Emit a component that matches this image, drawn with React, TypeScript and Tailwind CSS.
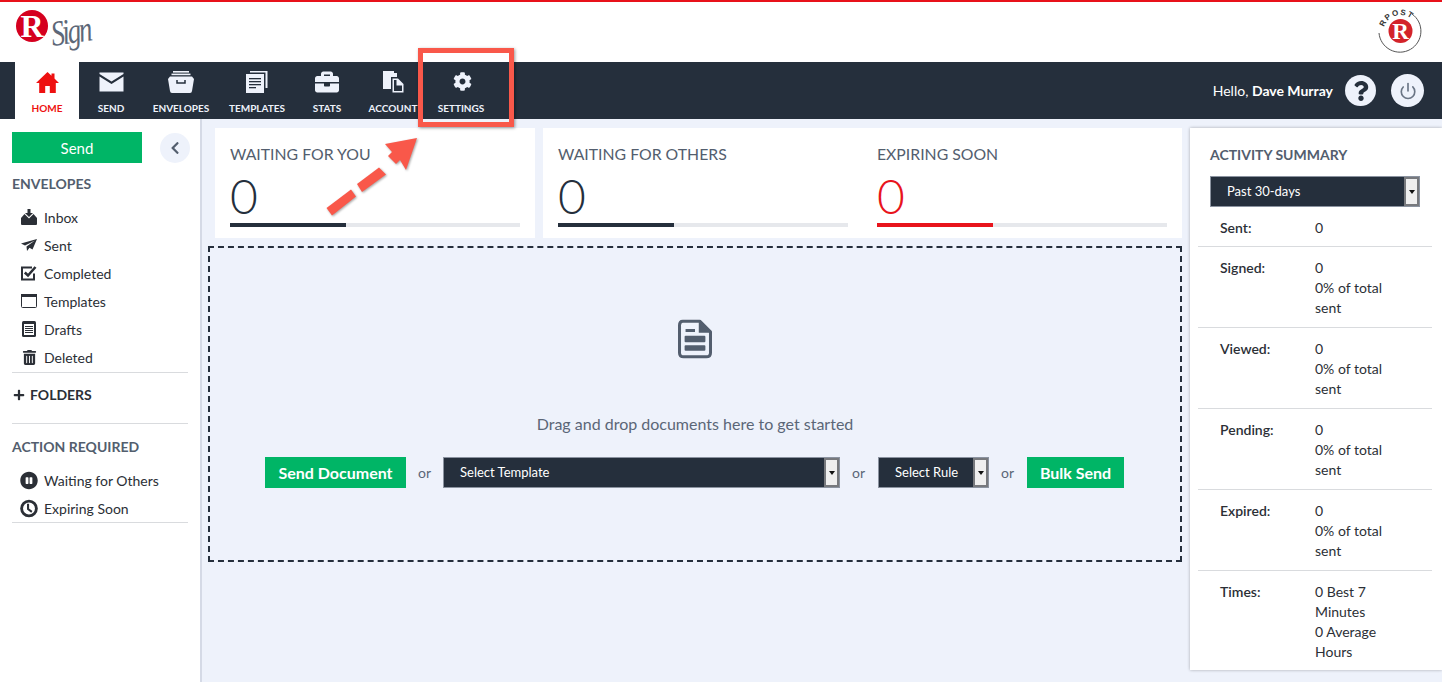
import React from "react";
import { FaCog, FaBriefcase, FaTrashAlt, FaPauseCircle, FaPlus, FaChevronLeft, FaQuestion } from "react-icons/fa";
import { Power } from "lucide-react";

const HomeIcon = () => (
  <svg width="23" height="21" viewBox="0 0 23 21"><path fill="#ee1111" d="M11.5 0 L15.5 3.8 V1.5 H18.5 V6.6 L23 11 H19.8 V21 H13.8 V14 H9.2 V21 H3.2 V11 H0 Z" /></svg>
);
const MailIcon = () => (
  <svg width="25" height="20" viewBox="0 0 25 20" fill="#eef2fb"><path d="M0.500 0.500 H24.500 V2 L12.500 9.500 L0.500 2 Z" /><path d="M0.500 4.500 L12.500 12 L24.500 4.500 V19.500 H0.500 Z" /></svg>
);
const DrawerIcon = () => (
  <svg width="26" height="22" viewBox="0 0 26 22" fill="#eef2fb"><rect x="5" y="0" width="16" height="1.6" /><rect x="3.5" y="2.6" width="19" height="1.6" /><path d="M2 5.5 H24 L26 8 L24 20 Q23.8 22 22 22 H4 Q2.2 22 2 20 L0 8 Z" /><path d="M9 9 V12 H17 V9" fill="none" stroke="#252f3c" strokeWidth="1.5" /></svg>
);
const PagesIcon = () => (
  <svg width="22" height="22" viewBox="0 0 22 22" fill="#eef2fb"><path d="M4 0 H21.500 V17 H19.500 V1.500 H4 Z" /><rect x="0" y="3" width="18" height="19" /><g fill="#252f3c"><rect x="3" y="7" width="12" height="1.300" /><rect x="3" y="10" width="12" height="1.300" /><rect x="3" y="13" width="12" height="1.300" /><rect x="3" y="16" width="7" height="1.300" /></g></svg>
);
const AccountIcon = () => (
  <svg width="21" height="22" viewBox="0 0 21 22" fill="#eef2fb"><path d="M0 0 H11 V2 H14 V6 H8 V18 H0 Z" /><path d="M9.500 7.500 H15 L20.500 13 V21.500 H9.500 Z M11 9 V20 H19 V14.500 H13.500 V9 Z" /></svg>
);
const InboxIcon = () => (
  <svg width="16" height="16" viewBox="0 0 16 16" fill="#2b2f36"><path d="M6.500 0 H9.500 V4 H12 L8 8 L4 4 H6.500 Z" /><path d="M3.500 5 L8 9.500 L12.500 5 L16 9 V15 Q16 16 15 16 H1 Q0 16 0 15 V9 Z" /></svg>
);
const PlaneIcon = () => (
  <svg width="16" height="12" viewBox="0 0 16 12" fill="#2b2f36"><path d="M16 0 L0 4.500 L4 6.500 L14 1.500 L5.500 7.500 L6 12 L8.500 8.800 L11.500 10.500 Z" /></svg>
);
const CheckBoxIcon = () => (
  <svg width="16" height="15" viewBox="0 0 16 15" fill="none" stroke="#2b2f36"><path d="M13 7.500 V13.500 H1 V1.500 H11" strokeWidth="2" /><path d="M3.800 6.500 L7 9.500 L14.500 1" strokeWidth="2.600" /></svg>
);
const WindowIcon = () => (
  <svg width="16" height="14" viewBox="0 0 16 14"><rect x="0.500" y="0.500" width="15" height="13" rx="1" fill="#fff" stroke="#2b2f36" /><rect x="0" y="0" width="16" height="3" fill="#2b2f36" /></svg>
);
const DraftIcon = () => (
  <svg width="14" height="16" viewBox="0 0 14 16"><rect width="14" height="16" rx="1.500" fill="#2b2f36" /><rect x="2" y="3" width="10" height="11" fill="#fff" /><g fill="#2b2f36"><rect x="3" y="5" width="8" height="1" /><rect x="3" y="7" width="8" height="1" /><rect x="3" y="9" width="8" height="1" /><rect x="3" y="11" width="8" height="1" /></g></svg>
);
const ClockIcon = () => (
  <svg width="19" height="19" viewBox="0 0 19 19" fill="none" stroke="#2b2f36"><circle cx="9.500" cy="9.500" r="7.800" strokeWidth="3" /><path d="M8.500 4.500 V10 L12.500 13" strokeWidth="2.200" /></svg>
);
const DocIcon = () => (
  <svg width="34" height="40" viewBox="0 0 36 41"><path fill="none" stroke="#535e6e" strokeWidth="3.200" strokeLinejoin="round" d="M5 1.600 H23 L34.400 13 V35 Q34.400 39.400 30 39.400 H6 Q1.600 39.400 1.600 35 V6 Q1.600 1.600 5 1.600 Z" /><path fill="#535e6e" d="M22 2 V14 H34 Z M8 10 H18 V13 H8 Z" /><rect x="7" y="17" width="22" height="7" rx="1" fill="#535e6e" /><rect x="7" y="27" width="22" height="6" rx="1" fill="#535e6e" /></svg>
);

const NAV = [
  { label: "SEND", w: "w-[64px]", icon: <MailIcon /> },
  { label: "ENVELOPES", w: "w-[76px]", icon: <DrawerIcon /> },
  { label: "TEMPLATES", w: "w-[76px]", icon: <PagesIcon /> },
  { label: "STATS", w: "w-[64px]", icon: <FaBriefcase size={24} /> },
  { label: "ACCOUNT", w: "w-[68px]", icon: <AccountIcon /> },
  { label: "SETTINGS", w: "w-[68px]", icon: <FaCog size={19} className="ml-[2px] -mt-[2px]" /> },
];

const ENVELOPES = [
  { label: "Inbox", icon: <InboxIcon /> },
  { label: "Sent", icon: <PlaneIcon /> },
  { label: "Completed", icon: <CheckBoxIcon /> },
  { label: "Templates", icon: <WindowIcon /> },
  { label: "Drafts", icon: <DraftIcon /> },
  { label: "Deleted", icon: <FaTrashAlt size={15} /> },
];

const Stat = ({ title, red }: { title: string; red?: boolean }) => (
  <div className="w-[290px]">
    <div className="text-[15.8px] leading-[20px] text-[#535e6e]">{title}</div>
    <div className={`mt-[7px] text-[48px] leading-[50px] font-light ${red ? "text-[#e8141c]" : "text-[#252f3c]"}`}>0</div>
    <div className="mt-[2px] h-[4px] bg-[#e6e8ec]">
      <div className={`h-full w-[116px] ${red ? "bg-[#e8141c]" : "bg-[#252f3c]"}`} />
    </div>
  </div>
);

const Select = ({ label, w, pad }: { label: string; w: string; pad: string }) => (
  <div className={`${w} h-[31px] flex bg-[#252f3c] border border-[#8b93a0] text-white text-[13px]`}>
    <div className={`flex-1 flex items-center pt-[1px] ${pad}`}>{label}</div>
    <div className="w-[15px] bg-[#efefef] border-2 border-[#77797d] flex items-center justify-center">
      <div className="w-0 h-0 border-l-[3px] border-r-[3px] border-t-[4px] border-l-transparent border-r-transparent border-t-[#111]" />
    </div>
  </div>
);

const Or = ({ right }: { right: string }) => <span className={`w-[13px] ml-[12px] ${right} text-center text-[14px] text-[#5b6677]`}>or</span>;

const Row = ({ label, lines, last }: { label: string; lines: string[]; last?: boolean }) => (
  <div className={`ml-[8px] mr-[10px] flex px-[22px] ${last ? "" : "border-b border-[#d9dbde]"} pt-[11px] pb-[9px] text-[14px] leading-[20px] text-[#2b2f36]`}>
    <div className="w-[95px] font-semibold">{label}:</div>
    <div>
      {lines.map((l) => (
        <div key={l}>{l}</div>
      ))}
    </div>
  </div>
);

export default function App() {
  return (
    <div className="relative h-[682px] overflow-hidden bg-[#eef2fb] font-['Lato','Noto_Sans',sans-serif]">
      <header className="h-[62px] bg-white border-t-2 border-[#e8111a] flex items-center justify-between pl-[16px] pr-[18px]">
        <div className="flex items-start h-[50px]">
          <div className="w-[32px] h-[32px] mt-[3px] rounded-full bg-[#d5001f] flex items-center justify-center text-white text-[32px] leading-none font-bold font-['Liberation_Serif',serif]">R</div>
          <span className="ml-[3px] mt-[9px] text-[36px] leading-[36px] italic text-[#5d6878] font-['Liberation_Serif',serif] tracking-[-3px] -rotate-[8deg] scale-x-[0.75] origin-left">Sign</span>
        </div>
        <svg width="46" height="46" viewBox="0 0 46 46">
          <path id="ringpath" d="M6.200 18 A17 17 0 0 1 33 9.600" fill="none" />
          <text fontSize="8" fontWeight="700" fill="#333" fontFamily="Liberation Sans" letterSpacing="1.200"><textPath href="#ringpath">RPOST</textPath></text>
          <path d="M34 5 A21 21 0 1 1 1 24" fill="none" stroke="#555" strokeWidth="1" />
          <circle cx="22.500" cy="22" r="12" fill="#d3232a" />
          <text x="22.500" y="30" textAnchor="middle" fontSize="23" fontWeight="700" fill="#fff" fontFamily="Liberation Serif">R</text>
        </svg>
      </header>

      <nav className="h-[57px] bg-[#252f3c] flex items-stretch justify-between pl-[15px] pr-[18px]">
        <div className="flex">
          <div className="w-[64px] bg-white flex flex-col items-center">
            <div className="h-[40px] flex items-center"><HomeIcon /></div>
            <div className="text-[10px] leading-[13px] font-bold text-[#ee1111]">HOME</div>
          </div>
          {NAV.map((n) => (
            <div key={n.label} className={`${n.w} flex flex-col items-center text-[#eef2fb]`}>
              <div className="h-[40px] flex items-center">{n.icon}</div>
              <div className="text-[10px] leading-[13px] font-bold whitespace-nowrap">{n.label}</div>
            </div>
          ))}
        </div>
        <div className="flex items-center">
          <span className="text-[14px] text-white mr-[12px]">Hello, <b>Dave Murray</b></span>
          <div className="w-[31px] h-[31px] rounded-full bg-[#eef2fb] flex items-center justify-center text-[#252f3c]"><FaQuestion size={20} /></div>
          <div className="w-[33px] h-[33px] ml-[15px] rounded-full bg-[#eef2fb] flex items-center justify-center text-[#6a7585]"><Power size={18} strokeWidth={2.2} /></div>
        </div>
      </nav>

      <div className="flex h-[563px]">
        <aside className="w-[202px] shrink-0 bg-white border-r-2 border-[#d5dae6] pl-[12px] pr-[12px] pt-[13px]">
          <div className="flex items-center justify-between">
            <div className="w-[130px] h-[31px] bg-[#00b566] text-white text-[15px] flex items-center justify-center pt-[1px]">Send</div>
            <div className="w-[30px] h-[30px] rounded-full bg-[#eef2fb] flex items-center justify-center text-[#535e6e] -mr-[2px]"><FaChevronLeft size={14} /></div>
          </div>
          <div className="mt-[11px] text-[14px] leading-[20px] font-bold text-[#535e6e]">ENVELOPES</div>
          <ul className="mt-[9px] pb-[1px] border-b border-[#d9dbde]">
            {ENVELOPES.map((e) => (
              <li key={e.label} className="h-[28px] flex items-center text-[14px] text-[#2b2f36]">
                <span className="w-[18px] ml-[8px] mr-[6px] flex justify-center">{e.icon}</span>{e.label}
              </li>
            ))}
          </ul>
          <div className="mt-[12px] pb-[18px] border-b border-[#d9dbde] flex items-center text-[14px] leading-[20px] font-bold text-[#2b2f36]">
            <FaPlus size={12} className="ml-[1px] mr-[5px]" />FOLDERS
          </div>
          <div className="mt-[13px] text-[14px] leading-[20px] font-bold text-[#535e6e]">ACTION REQUIRED</div>
          <ul className="mt-[9px] border-b border-[#d9dbde]">
            <li className="h-[28px] flex items-center text-[14px] text-[#2b2f36]">
              <span className="w-[18px] ml-[8px] mr-[6px] flex justify-center"><FaPauseCircle size={19} /></span>Waiting for Others
            </li>
            <li className="h-[28px] flex items-center text-[14px] text-[#2b2f36]">
              <span className="w-[18px] ml-[8px] mr-[6px] flex justify-center"><ClockIcon /></span>Expiring Soon
            </li>
          </ul>
        </aside>

        <main className="w-[974px] ml-[6px] shrink-0 pt-[9px]">
          <div className="flex h-[110px] pl-[7px] gap-[8px]">
            <div className="w-[320px] bg-white px-[15px] pt-[16px]"><Stat title="WAITING FOR YOU" /></div>
            <div className="flex-1 bg-white px-[15px] pt-[16px] flex gap-[30px]">
              <Stat title="WAITING FOR OTHERS" />
              <div className="-ml-[1px]"><Stat title="EXPIRING SOON" red /></div>
            </div>
          </div>
          <div className="mt-[8px] h-[316px] border-2 border-dashed border-[#252f3c] flex flex-col items-center pt-[71px]">
            <DocIcon />
            <div className="mt-[54px] text-[16px] leading-[22px] text-[#5b6677]">Drag and drop documents here to get started</div>
            <div className="mt-[22px] mr-[1px] flex items-center">
              <div className="w-[141px] h-[31px] bg-[#00b566] text-white text-[16px] font-bold flex items-center justify-center">Send Document</div>
              <Or right="mr-[12px]" />
              <Select label="Select Template" w="w-[397px]" pad="pl-[16px]" />
              <Or right="mr-[13px]" />
              <Select label="Select Rule" w="w-[111px]" pad="pl-[16px]" />
              <Or right="mr-[13px]" />
              <div className="w-[97px] h-[31px] bg-[#00b566] text-white text-[16px] font-bold flex items-center justify-center">Bulk Send</div>
            </div>
          </div>
        </main>

        <section className="w-[252px] h-[542px] ml-[8px] mt-[9px] shrink-0 bg-white shadow-[0_0_3px_rgba(0,0,0,0.3)]">
          <div className="pl-[20px] pt-[17px] text-[14px] leading-[20px] font-bold text-[#535e6e]">ACTIVITY SUMMARY</div>
          <div className="pl-[20px] mt-[11px]">
            <Select label="Past 30-days" w="w-[210px]" pad="pl-[16px]" />
          </div>
          <div className="flex ml-[8px] mr-[10px] px-[22px] pt-[11px] pb-[8px] border-b border-[#d9dbde] text-[14px] leading-[20px] text-[#2b2f36]">
            <div className="w-[95px] font-semibold">Sent:</div><div>0</div>
          </div>
          <Row label="Signed" lines={["0", "0% of total", "sent"]} />
          <Row label="Viewed" lines={["0", "0% of total", "sent"]} />
          <Row label="Pending" lines={["0", "0% of total", "sent"]} />
          <Row label="Expired" lines={["0", "0% of total", "sent"]} />
          <Row label="Times" lines={["0 Best 7", "Minutes", "0 Average", "Hours"]} last />
        </section>
      </div>

      <div className="absolute left-[418px] top-[48px] w-[96px] h-[79px] border-[5px] border-[#f9584a] shadow-[1px_1px_3px_rgba(0,0,0,0.4)]" />
      <svg className="absolute left-[320px] top-[130px]" width="105" height="90" viewBox="320 130 105 90">
        <g fill="#f9584a" style={{ filter: "drop-shadow(1px 1px 1px rgba(0,0,0,0.35))" }}>
          <path d="M326.500 208 L351 189.500 L356 196.500 L332 215.500 Z" />
          <path d="M357 184 L379 167.500 L386 174.500 L362 192 Z" />
          <path d="M417 138 L385 144 L392 152 L388 156 L396 164 L400 160 L406 170 Z" />
        </g>
      </svg>
    </div>
  );
}
